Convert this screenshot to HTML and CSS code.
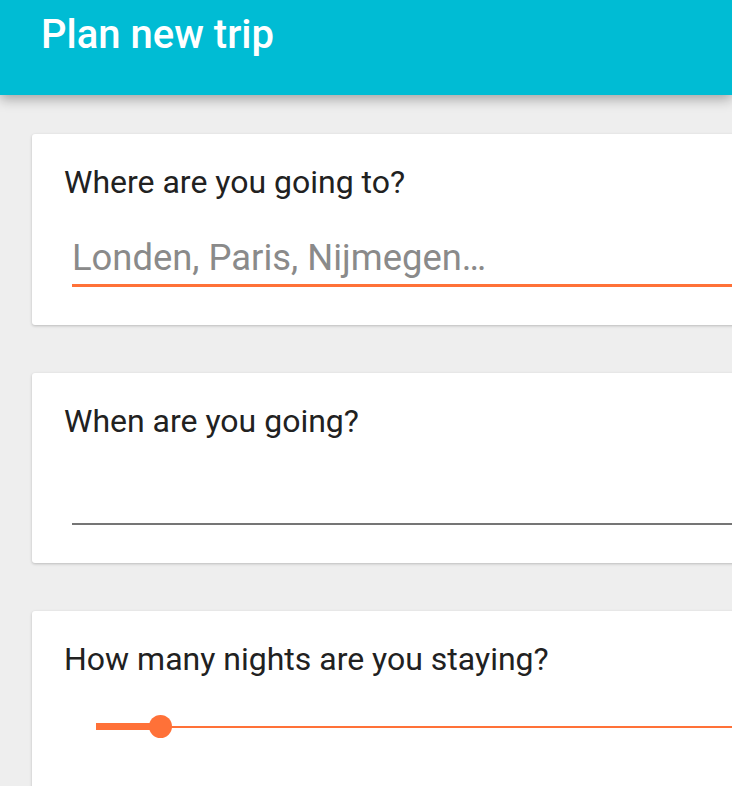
FILE: index.html
```html
<!DOCTYPE html>
<html>
<head>
<meta charset="utf-8">
<link rel="stylesheet" href="styles.css">
</head>
<body>
<header class="toolbar">
  <h1 class="title">Plan new trip</h1>
</header>
<main class="content">
  <section class="card">
    <label class="label" for="dest">Where are you going to?</label>
    <input id="dest" class="field field-active" type="text" placeholder="Londen, Paris, Nijmegen…">
  </section>
  <section class="card">
    <label class="label" for="when">When are you going?</label>
    <input id="when" class="field" type="text">
  </section>
  <section class="card">
    <div class="label">How many nights are you staying?</div>
    <div class="slider">
      <div class="slider-fill"></div>
      <div class="slider-thumb"></div>
      <div class="slider-rest"></div>
    </div>
  </section>
</main>
</body>
</html>
```
FILE: styles.css
```css
html, body {
  margin: 0;
  padding: 0;
}
body {
  background: #eeeeee;
  font-family: Roboto, "Liberation Sans", sans-serif;
  overflow: hidden;
  width: 732px;
  height: 786px;
}
.toolbar {
  background: #00bcd4;
  height: 95px;
  box-sizing: border-box;
  padding: 11px 0 0 41px;
  box-shadow: 0 4px 12px rgba(0,0,0,0.32);
  position: relative;
  z-index: 1;
}
.title {
  margin: 0;
  font-size: 40px;
  font-weight: 500;
  line-height: normal;
  color: #ffffff;
}
.content {
  width: 732px;
  height: 691px;
  box-sizing: border-box;
  overflow: hidden;
  padding: 39px 0 0 32px;
  display: flex;
  flex-direction: column;
  gap: 48px;
}
.card {
  background: #ffffff;
  width: 760px;
  flex-shrink: 0;
  box-sizing: border-box;
  border-radius: 3px;
  box-shadow: 0 1px 3px rgba(0,0,0,0.22);
  padding: 29px 0 0 32px;
  height: 191px;
  display: flex;
  flex-direction: column;
}
.card:nth-child(2) {
  height: 190px;
}
.label {
  display: block;
  font-size: 32px;
  line-height: normal;
  color: #212121;
}
.field {
  display: block;
  margin: 35px 0 0 8px;
  padding: 0 0 5px 0;
  border: none;
  border-bottom: 2px solid #757575;
  outline: none;
  font-family: Roboto, "Liberation Sans", sans-serif;
  font-size: 36.4px;
  line-height: normal;
  height: auto;
  color: #212121;
  background: transparent;
  width: 720px;
}
.field-active {
  border-bottom: 3px solid #ff7138;
}
.field::placeholder {
  color: #8a8a8a;
}
.slider {
  margin: 37px 0 0 32px;
  height: 23px;
  display: flex;
  align-items: center;
}
.slider-fill {
  width: 54px;
  height: 7px;
  background: #ff7138;
}
.slider-thumb {
  width: 23px;
  height: 23px;
  border-radius: 50%;
  background: #ff7138;
  margin-left: -1px;
}
.slider-rest {
  flex: 1;
  height: 2px;
  background: #ff7138;
  margin-left: -1px;
}
```
